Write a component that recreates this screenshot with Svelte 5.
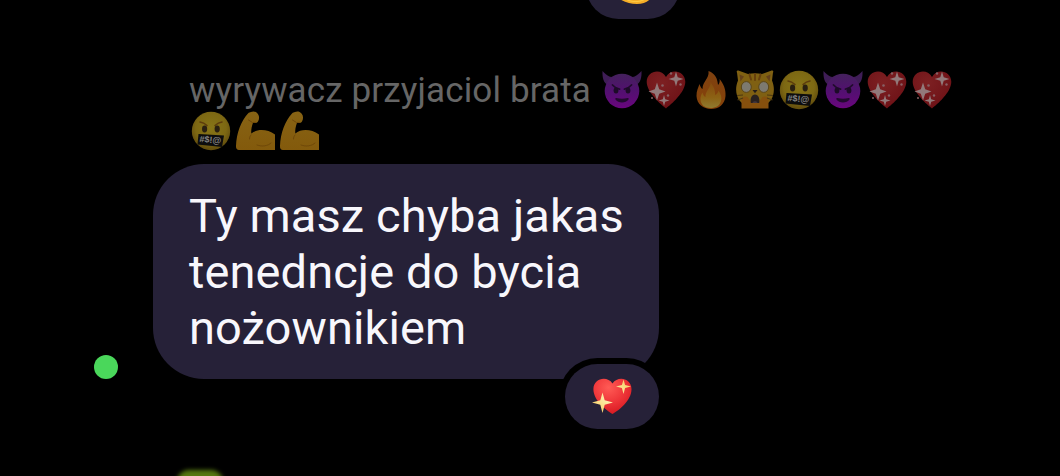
<script lang="ts">
    type Emoji = 'devil' | 'sparkHeart' | 'fire' | 'cat' | 'curse' | 'arm';

    const quoted = {
        text: 'wyrywacz przyjaciol brata',
        first: ['devil', 'sparkHeart', 'fire', 'cat', 'curse', 'devil', 'sparkHeart', 'sparkHeart'] as Emoji[],
        second: ['curse', 'arm', 'arm'] as Emoji[],
    };
    const message = ['Ty masz chyba jakas', 'tenedncje do bycia', 'nożownikiem'];
</script>

<svg class="defs" aria-hidden="true">
    <defs>
        <linearGradient id="purple" x1="0" y1="0" x2="0" y2="1">
            <stop offset="0" stop-color="#44215c" />
            <stop offset=".5" stop-color="#521070" />
            <stop offset="1" stop-color="#6a067e" />
        </linearGradient>
        <radialGradient id="darkRed" cx=".4" cy=".3" r=".75">
            <stop offset="0" stop-color="#7d2022" />
            <stop offset="1" stop-color="#6c1015" />
        </radialGradient>
        <linearGradient id="flame" x1="0" y1="0" x2="0" y2="1">
            <stop offset="0" stop-color="#7e4110" />
            <stop offset="1" stop-color="#864209" />
        </linearGradient>
        <linearGradient id="flameCore" x1="0" y1="0" x2="0" y2="1">
            <stop offset="0" stop-color="#84490e" />
            <stop offset=".6" stop-color="#8c6214" />
            <stop offset="1" stop-color="#8f7b30" />
        </linearGradient>
        <radialGradient id="face" cx=".5" cy=".42" r=".55">
            <stop offset="0" stop-color="#877517" />
            <stop offset=".72" stop-color="#7d6813" />
            <stop offset="1" stop-color="#65500e" />
        </radialGradient>
        <linearGradient id="skin" x1="0" y1="0" x2="0" y2="1">
            <stop offset="0" stop-color="#876314" />
            <stop offset="1" stop-color="#835a0c" />
        </linearGradient>
        <radialGradient id="brightRed" cx=".4" cy=".25" r=".8">
            <stop offset="0" stop-color="#ff5b55" />
            <stop offset=".55" stop-color="#ee3438" />
            <stop offset="1" stop-color="#d5171f" />
        </radialGradient>
        <radialGradient id="gold">
            <stop offset="0" stop-color="#fffbc7" />
            <stop offset="1" stop-color="#f9d574" />
        </radialGradient>
    </defs>
</svg>

{#snippet emoji(name: Emoji)}
    <svg class="emoji" viewBox="0 0 40 40" aria-hidden="true">
        {#if name === 'devil'}
            <path d="M.5 1c-.3 6.5 1 12 5.500 14l9-7C9.500 7.500 5 6.500.5 1zM39.500 1c.3 6.500-1 12-5.500 14l-9-7c5.500-.5 10-1.500 14.500-7z" fill="#3f1d56" />
            <circle cx="20" cy="21" r="17.300" fill="url(#purple)" />
            <path d="M10.500 15c2 2.300 4.500 3.700 7 4.200M29.500 15c-2 2.300-4.500 3.700-7 4.200" fill="none" stroke="#200c2c" stroke-width="1.800" stroke-linecap="round" />
            <ellipse cx="14" cy="20.500" rx="2.400" ry="3" fill="#1d0b28" />
            <ellipse cx="26" cy="20.500" rx="2.400" ry="3" fill="#1d0b28" />
            <path d="M14.500 28c3.500 1 7.500 1 11 0 1.200-.3 1.500.6 1 1.600-2.600 4-10.400 4-13 0-.5-1-.2-1.900 1-1.600z" fill="#230a30" />
        {:else if name === 'sparkHeart'}
            <path d="M20 38.500C15 34.500.7 22.500.7 11.800.7 1.500 14.500-2.500 20 7 25.500-2.500 39.300 1.500 39.300 11.800 39.300 22.500 25 34.500 20 38.500z" fill="url(#darkRed)" />
            <path d="M30 1.500l1.700 5.800L37.500 9l-5.800 1.700L30 16.500l-1.700-5.800L22.500 9l5.800-1.700zM11 12.500l2.200 6.800 6.300 2.200-6.300 2.200-2.200 6.800-2.200-6.800-6.300-2.200 6.300-2.200zM18 25l1.200 4.300 4.300 1.200-4.300 1.200L18 36l-1.200-4.300-4.300-1.200 4.300-1.200z" fill="#92797a" />
            <g fill="#876064">
                <circle cx="25" cy="3.500" r="1.200" />
                <circle cx="34.500" cy="14.500" r="1.200" />
                <circle cx="16.500" cy="15.500" r="1.300" />
                <circle cx="22" cy="25.500" r="1.200" />
                <circle cx="6" cy="28" r="1" />
            </g>
        {:else if name === 'fire'}
            <path d="M17.500 1c7 2.500 9 8 9.500 14 1.500-1.500 2-4 1.500-6 4 4.500 6.500 10.500 6 17-.5 8.500-7 13-14.500 13S5.800 34 5.500 26c-.2-5 2-9 3-12 .8 2.500 1.500 4 3 5 0-8 7-10 6-18z" fill="url(#flame)" />
            <path d="M19.500 12c3 4.500 5 8 4.500 13 2-.8 3-2.500 3.500-4.500 2.500 3.500 3.500 7 2.500 10.500-1.400 5-5.400 7-10.500 7-5.500 0-9.500-3-10-8-.3-3 .7-5.500 2-7.500.6 2.200 1.300 3.600 3 4.500-.5-6 5.500-9 5-15z" fill="url(#flameCore)" />
        {:else if name === 'cat'}
            <path d="M2 2.500C1 1 2.800.2 4 .8L13 4c4.500-1 9.500-1 14 0L36 .8c1.200-.6 3 .2 2 1.700l-1 8c2 5 2.500 10 1 15-1 4-3.500 6.500-6.500 8.500h-23C5.500 32 3 29.500 2 25.500c-1.500-5-1-10 1-15z" fill="#7f6012" />
            <path d="M4.500 4.500l4.500 2-3.500 5zM35.500 4.500l-4.500 2 3.500 5z" fill="#64401a" />
            <path d="M14.500 4.500l1.500 5M20 4v6M25.500 4.500l-1.500 5" stroke="#663f0d" stroke-width="2" stroke-linecap="round" />
            <path d="M6.500 38.500V30c0-3 3-4.500 6-3l3 4h9l3-4c3-1.500 6 0 6 3v8.500z" fill="#86500d" />
            <ellipse cx="11.300" cy="17" rx="5" ry="5.400" fill="#7d7a70" stroke="#5b4618" />
            <ellipse cx="28.700" cy="17" rx="5" ry="5.400" fill="#7d7a70" stroke="#5b4618" />
            <path d="M17.500 20h5L20 23.300z" fill="#241d19" />
            <path d="M20 24.500c-3.300 0-5 4-4.200 8.500h8.400c.8-4.500-.9-8.500-4.200-8.500z" fill="#29211f" />
            <path d="M17.500 33c0-2.500 5-2.500 5 0z" fill="#42353a" />
            <path d="M2 25.500l6-.5M2.500 30l5.500-2M38 25.500l-6-.5M37.500 30L32 28" stroke="#4d3811" stroke-width="1.200" />
        {:else if name === 'curse'}
            <circle cx="20" cy="20" r="19.200" fill="url(#face)" />
            <path d="M9 11c2.500.3 5 1.600 7 3.500M31 11c-2.500.3-5 1.600-7 3.500" fill="none" stroke="#5d3c0d" stroke-width="1.500" stroke-linecap="round" />
            <ellipse cx="13.600" cy="18" rx="2.600" ry="3.400" fill="#2a2010" />
            <ellipse cx="26.200" cy="18" rx="2.600" ry="3.400" fill="#2a2010" />
            <path d="M7.500 23l25.500 1.600L31 36 6.500 33.500z" fill="#0d0d0d" />
            <text x="8.500" y="31.800" transform="rotate(4 20 29)">#$!@</text>
        {:else}
            <path d="M16 1c2-1 5-.6 6.500 1.500 2 2.200 2 5.500.5 8-1 1.500-3 2-5 1.300C16.500 16 16 19.500 16.300 22.500c6-5 16-4.500 23.700 1V39H4C2 39 .8 37.500 1 35 1.500 22 6 10 13 2.500 14 1.500 15 1.200 16 1z" fill="url(#skin)" />
            <path d="M16 24c-1 1-1.500 2.500-1.500 4M13.500 9l4 2.500 3-.2M22 34c5 2 11 1 14-2" fill="none" stroke="#6f4809" stroke-width="1" stroke-linecap="round" />
        {/if}
    </svg>
{/snippet}

<main class="chat">
    <div class="reaction previous">
        <svg class="reaction-icon" viewBox="0 0 40 40" aria-hidden="true">
            <path d="M3 20h36v9c-2 5-8 8-15 8-7 0-13-2-19-6z" fill="#f5ad27" />
            <path d="M12 32c7 3 16 3 22-1-3 4-15 6-22 1z" fill="#ffd149" />
        </svg>
    </div>

    <div class="quote">
        <div class="quote-line">
            <span class="quote-text">{quoted.text}</span>
            {#each quoted.first as name}
                {@render emoji(name)}
            {/each}
        </div>
        <div class="quote-line second">
            {#each quoted.second as name}
                {@render emoji(name)}
            {/each}
        </div>
    </div>

    <div class="row">
        <span class="online"></span>
        <div class="bubble">
            {#each message as line}
                <p>{line}</p>
            {/each}
            <div class="reaction current">
                <svg class="reaction-icon" viewBox="0 0 40 40" aria-hidden="true">
                    <path d="M20.500 37C14 33 1.400 23.500 1.400 12.300 1.400 1.300 15-1.700 20.500 6.500 26-1.700 39.500 1.300 39.500 12.300 39.500 23.500 27 33.500 20.500 37z" fill="url(#brightRed)" />
                    <path d="M10.500 15.500l2.200 7.800 8.300 2.200-8.300 2.200-2.200 8.300-2.200-8.300L0 25.500l8.300-2.200zM31.500 2.500l1.600 5.400 5.900 1.600-5.900 1.600-1.600 5.900-1.600-5.900L24 9.500l5.900-1.600z" fill="url(#gold)" />
                </svg>
            </div>
        </div>
    </div>

    <span class="next-avatar"></span>
</main>

<style>
    :global(body) {
        background: #000;
    }
    .defs {
        position: absolute;
        width: 0;
        height: 0;
    }
    .chat {
        position: relative;
        display: flex;
        flex-direction: column;
        width: 1060px;
        height: 476px;
        overflow: hidden;
        background: #000;
        font-family: Roboto, "Noto Sans", sans-serif;
    }
    .reaction {
        display: flex;
        align-items: center;
        justify-content: center;
        box-sizing: border-box;
        width: 94px;
        height: 65px;
        border-radius: 33px;
        background: #262138;
    }
    .reaction-icon {
        width: 40px;
        height: 40px;
    }
    .previous {
        flex: none;
        margin: -46px 0 0 586px;
    }
    .quote {
        display: flex;
        flex-direction: column;
        gap: 1px;
        padding: 51px 0 0 189px;
    }
    .quote-line {
        display: flex;
        gap: 4.2px;
        height: 40px;
    }
    .second {
        padding-left: 1.5px;
    }
    .quote-text {
        width: 409px;
        color: #666;
        font-size: 35px;
        line-height: 41px;
        letter-spacing: 0.14px;
        white-space: nowrap;
    }
    .emoji {
        flex: none;
        width: 40px;
        height: 40px;
    }
    .emoji text {
        fill: #858585;
        font: bold 9px "Liberation Sans", sans-serif;
    }
    .row {
        display: flex;
        align-items: flex-end;
        gap: 35px;
        padding: 12.5px 0 0 94px;
    }
    .online {
        width: 24px;
        height: 24px;
        border-radius: 50%;
        background: #4ad75b;
    }
    .bubble {
        position: relative;
        box-sizing: border-box;
        width: 506px;
        height: 215px;
        padding: 24px 36px;
        border-radius: 51px;
        background: #262138;
    }
    .bubble p {
        margin: 0;
        color: #f8f7fc;
        font-size: 47px;
        line-height: 56px;
        letter-spacing: 0.09px;
        white-space: nowrap;
    }
    .current {
        position: absolute;
        right: 0;
        bottom: -50.5px;
        box-shadow: 0 0 0 6px #000;
    }
    .next-avatar {
        position: absolute;
        left: 177px;
        top: 470px;
        width: 46px;
        height: 30px;
        border-radius: 12px;
        background: #567810;
        filter: blur(2px);
    }
</style>
